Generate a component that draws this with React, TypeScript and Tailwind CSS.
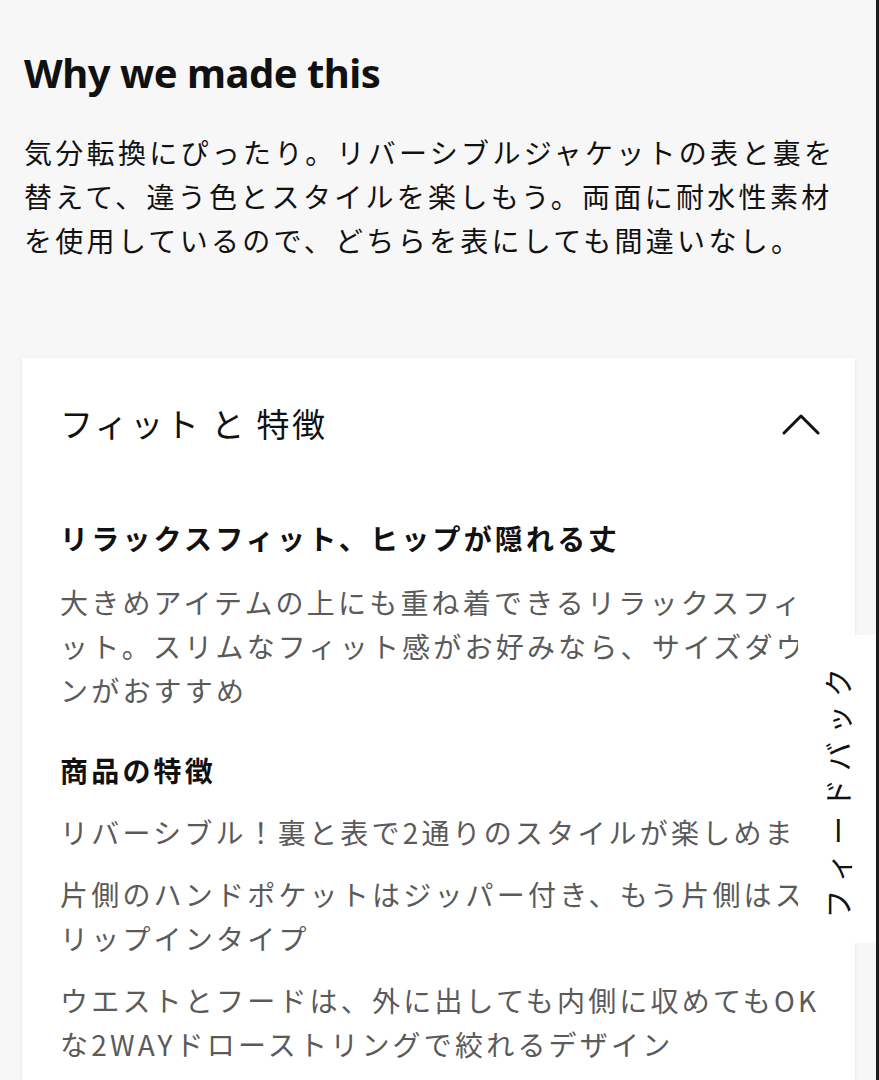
import React from 'react';

const jp = 'font-["Noto_Sans_CJK_JP","Noto_Sans",sans-serif]';

const ChevronUp: React.FC = () => (
  <svg width="38" height="22" viewBox="0 0 38 22" fill="none" stroke="#111" strokeWidth="3" strokeLinecap="round" strokeLinejoin="round">
    <path d="M2 20 L19 3 L36 20" />
  </svg>
);

const FeedbackTab: React.FC = () => (
  <div className="absolute right-0 top-[635px] flex h-[308px] w-[78px] items-center justify-center bg-white">
    <span
      className={`${jp} rotate-180 text-[29px] leading-none tracking-[8px] text-[#111] [writing-mode:vertical-rl] [text-orientation:sideways]`}
    >
      フィードバック
    </span>
  </div>
);

const App: React.FC = () => {
  return (
    <div className="flex min-h-screen bg-[#f7f7f7]">
      <div className="relative flex-1 overflow-hidden">
        <main className="pl-[22px] pr-[21px] pt-[48px] pb-20">
          <h1 className='ml-[2px] font-["Noto_Sans","Open_Sans",sans-serif] text-[40px] font-bold leading-[50px] tracking-[-0.5px] text-[#111]'>
            Why we made this
          </h1>
          <p className={`${jp} ml-[2px] mt-8 text-[28px] leading-[44px] tracking-[3.3px] text-[#111]`}>
            気分転換にぴったり。リバーシブルジャケットの表と裏を替えて、違う色とスタイルを楽しもう。両面に耐水性素材を使用しているので、どちらを表にしても間違いなし。
          </p>

          <section className="mt-[96px] bg-white pl-[38px] pr-[35px] pt-[42px] pb-10 shadow-[0_1px_4px_rgba(0,0,0,0.08)]">
            <div className="flex h-12 items-center justify-between">
              <h2 className={`${jp} text-[33px] tracking-[2.5px] text-[#111]`}>フィット と 特徴</h2>
              <ChevronUp />
            </div>

            <div className={`${jp} mt-[68px] text-[28px] leading-[44px] tracking-[3.2px]`}>
              <h3 className="font-semibold text-[#111]">リラックスフィット、ヒップが隠れる丈</h3>
              <p className="mt-5 text-[#5a5a5a]">
                大きめアイテムの上にも重ね着できるリラックスフィット。スリムなフィット感がお好みなら、サイズダウンがおすすめ
              </p>

              <h3 className="mt-9 font-semibold text-[#111]">商品の特徴</h3>
              <ul className="mt-[18px] flex flex-col gap-[18px] text-[#5a5a5a]">
                <li className="whitespace-nowrap">リバーシブル！裏と表で2通りのスタイルが楽しめます</li>
                <li>片側のハンドポケットはジッパー付き、もう片側はスリップインタイプ</li>
                <li>ウエストとフードは、外に出しても内側に収めてもOKな2WAYドローストリングで絞れるデザイン</li>
              </ul>
            </div>
          </section>
        </main>
        <FeedbackTab />
      </div>
      <div className="w-[3px] shrink-0 bg-[#1c1c1c]" />
    </div>
  );
};

export default App;
